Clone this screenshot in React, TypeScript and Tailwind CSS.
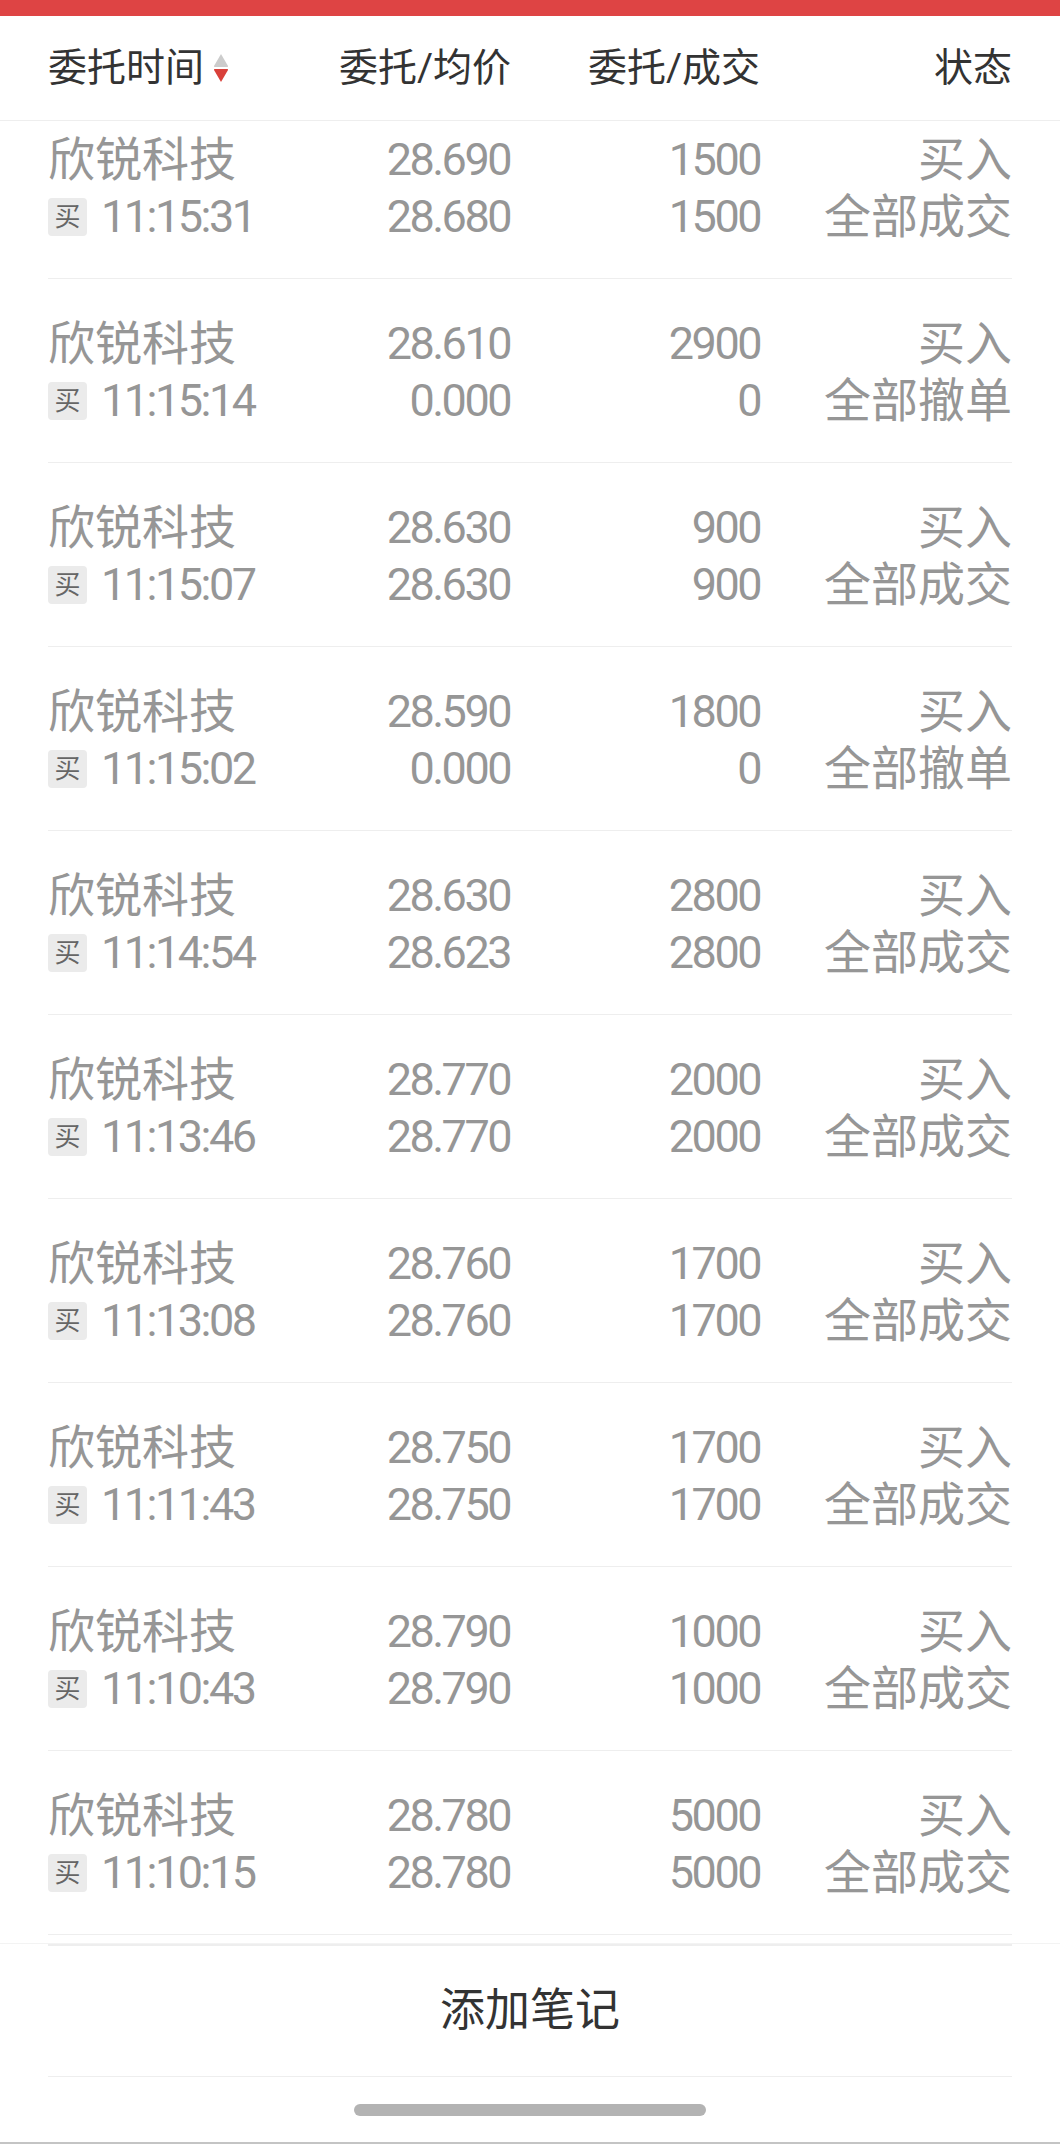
import React from "react";

type Row = {
  price: string;
  avg: string;
  qty: string;
  filled: string;
  time: string;
  status: string;
};

const rows: Row[] = [
  { price: "28.690", avg: "28.680", qty: "1500", filled: "1500", time: "11:15:31", status: "全部成交" },
  { price: "28.610", avg: "0.000", qty: "2900", filled: "0", time: "11:15:14", status: "全部撤单" },
  { price: "28.630", avg: "28.630", qty: "900", filled: "900", time: "11:15:07", status: "全部成交" },
  { price: "28.590", avg: "0.000", qty: "1800", filled: "0", time: "11:15:02", status: "全部撤单" },
  { price: "28.630", avg: "28.623", qty: "2800", filled: "2800", time: "11:14:54", status: "全部成交" },
  { price: "28.770", avg: "28.770", qty: "2000", filled: "2000", time: "11:13:46", status: "全部成交" },
  { price: "28.760", avg: "28.760", qty: "1700", filled: "1700", time: "11:13:08", status: "全部成交" },
  { price: "28.750", avg: "28.750", qty: "1700", filled: "1700", time: "11:11:43", status: "全部成交" },
  { price: "28.790", avg: "28.790", qty: "1000", filled: "1000", time: "11:10:43", status: "全部成交" },
  { price: "28.780", avg: "28.780", qty: "5000", filled: "5000", time: "11:10:15", status: "全部成交" },
];

const FONT = "font-['Roboto','Noto_Sans_CJK_SC',sans-serif]";

function SortIcon() {
  return (
    <svg width="16" height="30" viewBox="0 0 16 30" className="ml-[9px]">
      <path d="M8 1 L15 13 Q15.5 14 14 14 L2 14 Q0.5 14 1 13 Z" fill="#cccccc" />
      <path d="M8 29 L15 17 Q15.5 16 14 16 L2 16 Q0.5 16 1 17 Z" fill="#d9403a" />
    </svg>
  );
}

function Num({ children }: { children: React.ReactNode }) {
  return <span className="tracking-[-2.5px]">{children}</span>;
}

function OrderRow({ r }: { r: Row }) {
  return (
    <div className="h-[184px] border-b border-[#eeeeee] pt-[36px] text-[#969696]">
      <div className="grid grid-cols-[262px_200px_250px_1fr] text-[45px] leading-[57px]">
        <div className="text-[47px]">欣锐科技</div>
        <div className="text-right"><Num>{r.price}</Num></div>
        <div className="text-right"><Num>{r.qty}</Num></div>
        <div className="text-right text-[47px]">买入</div>

        <div className="flex items-center">
          <span className="flex h-[38px] w-[39px] items-center justify-center rounded-[4px] bg-[#ebebeb] text-[26px] leading-none text-[#666666]">
            买
          </span>
          <span className="ml-[14px]"><Num>{r.time}</Num></span>
        </div>
        <div className="text-right"><Num>{r.avg}</Num></div>
        <div className="text-right"><Num>{r.filled}</Num></div>
        <div className="text-right text-[47px]">{r.status}</div>
      </div>
    </div>
  );
}

export default function App() {
  return (
    <div className={`w-[1060px] h-[2144px] bg-white ${FONT} flex flex-col overflow-hidden`}>
      <div className="h-[16px] bg-[#de4444] shrink-0" />
      <div className="h-[105px] shrink-0 border-b border-[#eeeeee] px-[48px]">
        <div className="grid h-full grid-cols-[263px_200px_249px_1fr] items-center text-[39px] text-[#333333]">
          <div className="flex items-center">
            <span>委托时间</span>
            <SortIcon />
          </div>
          <div className="text-right">委托/均价</div>
          <div className="text-right">委托/成交</div>
          <div className="text-right">状态</div>
        </div>
      </div>
      <div className="h-[1822px] shrink-0 overflow-hidden px-[48px]">
        <div className="mt-[-26px]">
          {rows.map((r, i) => (
            <OrderRow key={i} r={r} />
          ))}
        </div>
      </div>
      <div className="flex-1 border-t border-[#f3f3f3] bg-white flex flex-col">
        <div className="mx-[48px] border-t-2 border-[#eeeeee]" />
        <div className="mx-[48px] flex h-[131px] items-center justify-center border-b border-[#eeeeee] text-[45px] text-[#333333]">
          添加笔记
        </div>
        <div className="flex flex-1 flex-col items-center pt-[27px] border-b-2 border-[#c4c4c4]">
          <div className="h-[12px] w-[352px] rounded-full bg-[#b3b3b3]" />
        </div>
      </div>
    </div>
  );
}
